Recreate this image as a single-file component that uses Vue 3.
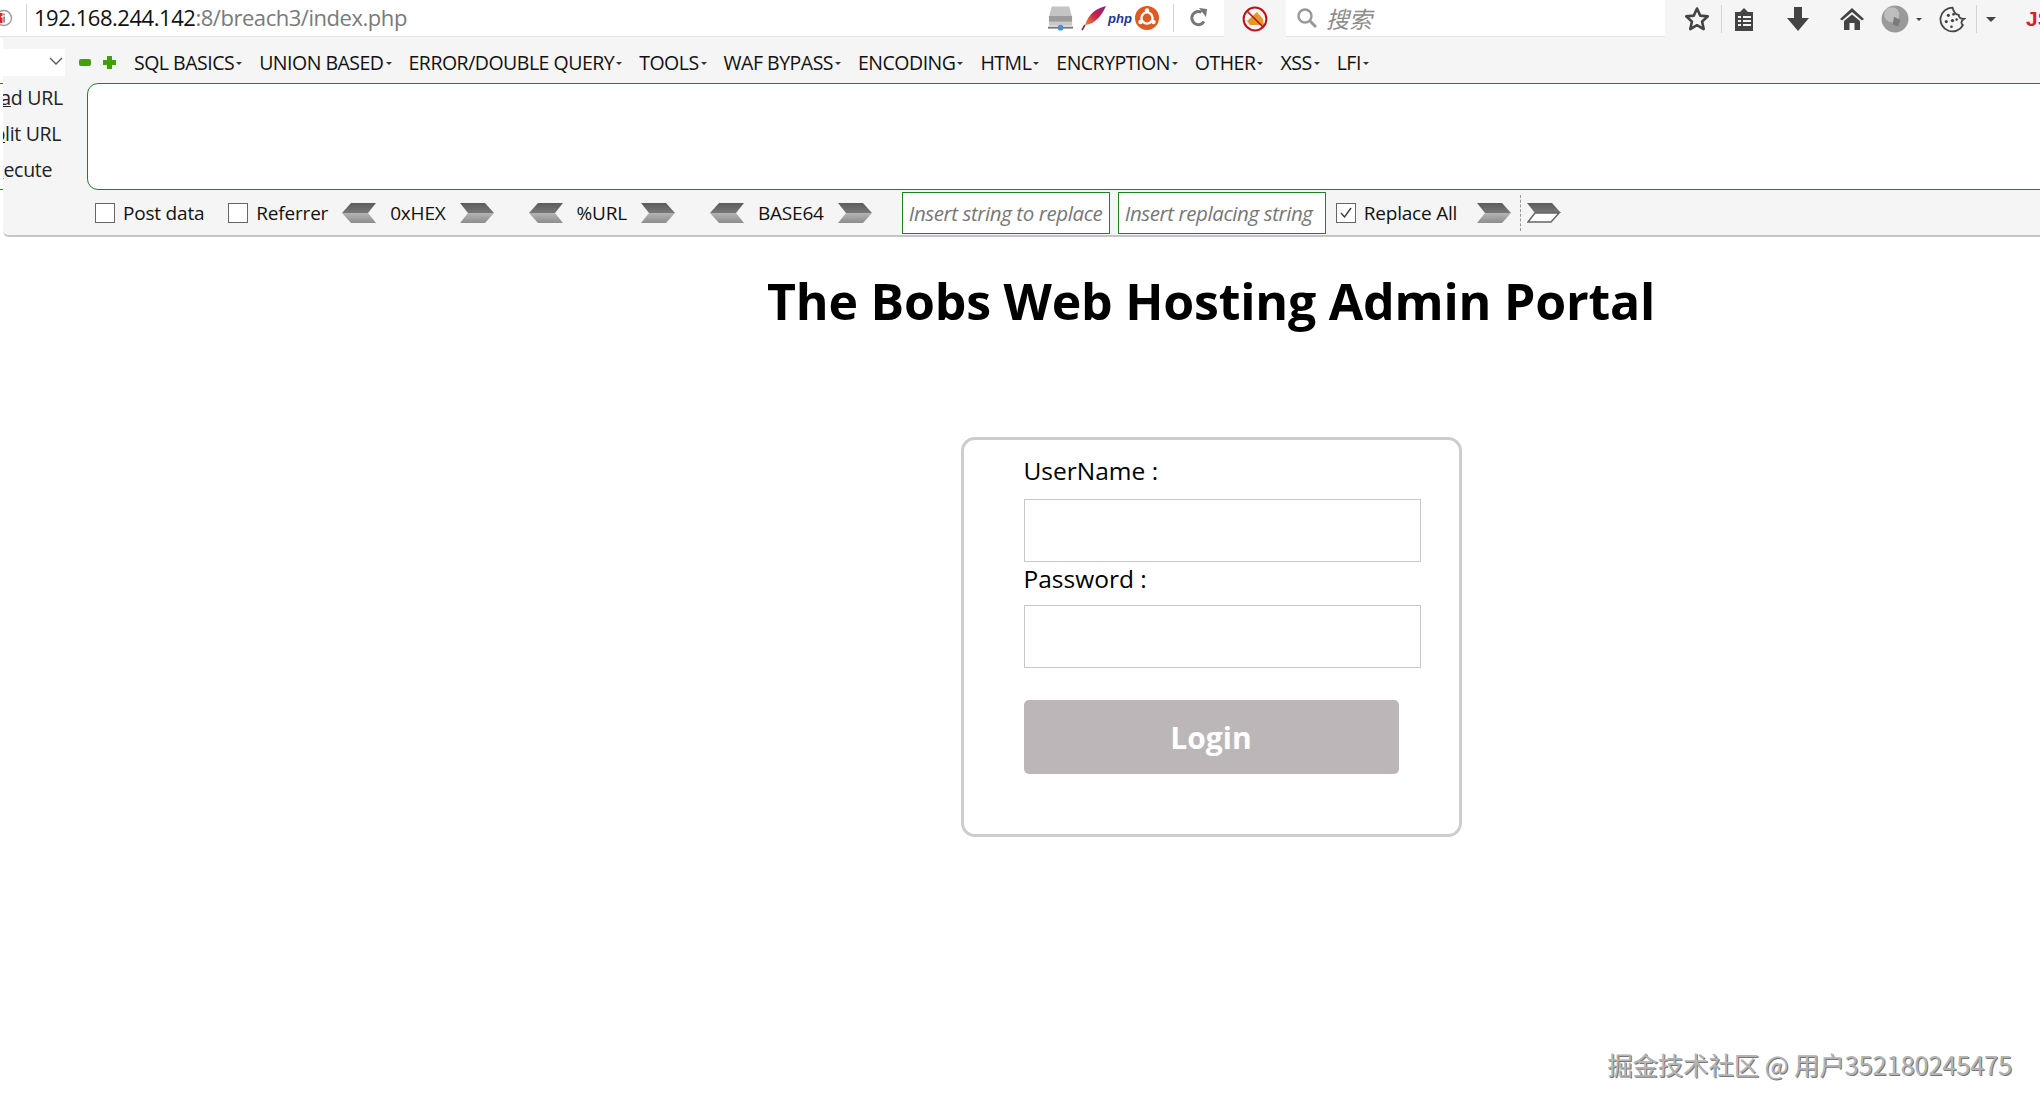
<script setup>
const menu = ['SQL BASICS', 'UNION BASED', 'ERROR/DOUBLE QUERY', 'TOOLS', 'WAF BYPASS', 'ENCODING', 'HTML', 'ENCRYPTION', 'OTHER', 'XSS', 'LFI']
const encoders = ['0xHEX', '%URL', 'BASE64']
</script>

<template>
  <div class="page">
    <svg width="0" height="0" class="defs">
      <defs>
        <linearGradient id="chevTop" x1="0" y1="0" x2="0" y2="1">
          <stop offset="0" stop-color="#5c5c5c" />
          <stop offset="1" stop-color="#777" />
        </linearGradient>
        <linearGradient id="chevBot" x1="0" y1="0" x2="0" y2="1">
          <stop offset="0" stop-color="#b4b4b4" />
          <stop offset="1" stop-color="#8d8d8d" />
        </linearGradient>
        <linearGradient id="feather" x1="1" y1="0" x2="0" y2="1">
          <stop offset="0" stop-color="#7b2a8c" />
          <stop offset="0.5" stop-color="#c8204f" />
          <stop offset="1" stop-color="#ef8a2a" />
        </linearGradient>
      </defs>
    </svg>

    <header class="navbar">
      <div class="urlbox">
        <svg class="site-info" width="14" height="22" viewBox="0 0 14 22">
          <circle cx="4" cy="11" r="7.5" fill="none" stroke="#9a9a9a" stroke-width="1.4" />
          <rect x="3.2" y="9.5" width="1.8" height="6" fill="#8a8a8a" />
          <rect x="3.2" y="6.5" width="1.8" height="1.8" fill="#8a8a8a" />
          <path d="M0 6h2.5v3H1v1.5h1.5V16H0z" fill="#d8282c" />
        </svg>
        <span class="sep"></span>
        <div class="address"><span class="host">192.168.244.142</span>:8/breach3/index.php</div>
        <svg class="ic-server" width="27" height="28" viewBox="0 0 28 28">
          <path d="M5 2h18l3 11H2z" fill="#c4c4c4" />
          <rect x="2" y="12" width="24" height="6" fill="#9b9b9b" />
          <rect x="2" y="18" width="24" height="4" fill="#c9c9c9" />
          <rect x="1" y="23" width="26" height="2" fill="#777" />
          <circle cx="14" cy="24" r="3" fill="#4a8fd0" />
        </svg>
        <svg class="ic-feather" width="26" height="26" viewBox="0 0 26 26">
          <path d="M25 1C16 3 8 8 4 20c4 0 14-3 21-19z" fill="url(#feather)" />
          <path d="M4 20l-3 5" stroke="#6b2a4b" stroke-width="1.5" />
        </svg>
        <span class="php">php</span>
        <svg class="ic-ubuntu" width="24" height="24" viewBox="0 0 24 24">
          <circle cx="12" cy="12" r="12" fill="#dd5a22" />
          <circle cx="12" cy="12" r="5.6" fill="none" stroke="#fff" stroke-width="2.4" />
          <circle cx="12" cy="4.5" r="2.2" fill="#fff" />
          <circle cx="5.5" cy="16" r="2.2" fill="#fff" />
          <circle cx="18.5" cy="16" r="2.2" fill="#fff" />
        </svg>
        <span class="sep sep-reload"></span>
        <svg class="ic-reload" width="20" height="20" viewBox="0 0 20 20">
          <path d="M15 13.5A6.6 6.6 0 1 1 12.5 4.2" fill="none" stroke="#777" stroke-width="3" />
          <path d="M10 0l8 1-1 8z" fill="#777" />
        </svg>
      </div>
      <div class="nope-cell">
        <svg width="26" height="26" viewBox="0 0 26 26">
          <path d="M5 15l10-9 6 7 1 6H8z" fill="#e39a2a" />
          <circle cx="13" cy="13" r="11.400" fill="none" stroke="#b8141c" stroke-width="2" />
          <path d="M5 5l16 16" stroke="#b8141c" stroke-width="1.700" />
        </svg>
      </div>
      <div class="search">
        <svg width="22" height="22" viewBox="0 0 22 22">
          <circle cx="9" cy="9" r="6.5" fill="none" stroke="#999" stroke-width="2.4" />
          <path d="M14 14l6 6" stroke="#999" stroke-width="3" />
        </svg>
        <span>搜索</span>
      </div>
      <div class="tools">
        <svg class="ic-star" width="26" height="26" viewBox="0 0 26 26">
          <path d="M13 2.5l3.2 7.1 7.6.8-5.7 5.1 1.6 7.6-6.7-3.9-6.7 3.9 1.6-7.6-5.7-5.1 7.6-.8z" fill="none" stroke="#444" stroke-width="2.6" stroke-linejoin="round" />
        </svg>
        <span class="sep sep-tool"></span>
        <svg class="ic-list" width="22" height="26" viewBox="0 0 22 26">
          <path d="M2 6h5l4-4 4 4h5v19H2z" fill="#444" />
          <path d="M5 11h3M10 11h8M5 15h3M10 15h8M5 19h3M10 19h8" stroke="#f5f5f5" stroke-width="1.8" />
        </svg>
        <svg class="ic-down" width="24" height="26" viewBox="0 0 24 26">
          <path d="M8 1h8v11h7L12 25 1 12h7z" fill="#444" />
        </svg>
        <svg class="ic-home" width="24" height="24" viewBox="0 0 24 24">
          <path d="M12 1L0 12l2 1.5L12 5l10 8.500 2-1.500z" fill="#444" />
          <path d="M4 14l8-6.500 8 6.500v9h-5.500v-7h-5v7H4z" fill="#444" />
        </svg>
        <svg class="ic-globe" width="28" height="28" viewBox="0 0 26 26">
          <circle cx="13" cy="13" r="12.500" fill="#9a9a9a" />
          <circle cx="10" cy="9" r="7" fill="#bdbdbd" />
          <path d="M12 11l6 3-2 6-5-2z" fill="#7a7a7a" />
        </svg>
        <span class="mini-caret"></span>
        <svg class="ic-cookie" width="27" height="27" viewBox="0 0 26 26">
          <path d="M13 1.500a11.500 11.500 0 1 0 10 17c-2-2-2-4 1-6-3 0-5-1-5-4-3 0-5-3-6-7z" fill="#f5f5f5" stroke="#444" stroke-width="1.7" />
          <circle cx="9" cy="9" r="1.500" fill="#444" />
          <circle cx="14" cy="8" r="1.300" fill="#444" />
          <circle cx="7" cy="15" r="1.500" fill="#444" />
          <circle cx="13" cy="14" r="1.600" fill="#444" />
          <circle cx="17" cy="13" r="1.200" fill="#444" />
          <circle cx="12" cy="20" r="1.300" fill="#444" />
        </svg>
        <span class="sep sep-cookie"></span>
        <span class="caret"></span>
        <span class="js">JS</span>
      </div>
    </header>

    <section class="hackbar">
      <div class="menu-row">
        <div class="select-box">
          <svg width="14" height="8" viewBox="0 0 14 8"><path d="M1 1l6 6 6-6" fill="none" stroke="#555" stroke-width="1.300" /></svg>
        </div>
        <span class="minus"></span>
        <svg class="plus" width="13" height="13" viewBox="0 0 13 13">
          <path d="M4 0h5v4h4v5H9v4H4V9H0V4h4z" fill="#3fa00c" />
        </svg>
        <nav class="menu">
          <span v-for="item in menu" :key="item" class="menu-item">{{ item }}<i class="drop"></i></span>
        </nav>
      </div>

      <div class="url-row">
        <div class="actions">
          <span class="action a-load">Lo<u>a</u>d URL</span>
          <span class="action a-split">S<u>p</u>lit URL</span>
          <span class="action a-exec">E<u>x</u>ecute</span>
        </div>
        <div class="url-area"></div>
      </div>

      <div class="option-row">
        <label class="check first"><span class="box"></span>Post data</label>
        <label class="check second"><span class="box"></span>Referrer</label>
        <div v-for="enc in encoders" :key="enc" class="encoder">
          <svg class="chev" width="34" height="20" viewBox="0 0 34 20">
            <path d="M9 0h25l-8 10H0z" fill="url(#chevTop)" />
            <path d="M0 10h26l8 10H9z" fill="url(#chevBot)" />
          </svg>
          <span class="enc-label">{{ enc }}</span>
          <svg class="chev" width="34" height="20" viewBox="0 0 34 20">
            <path d="M0 0h25l9 10H8z" fill="url(#chevTop)" />
            <path d="M8 10h26l-9 10H0z" fill="url(#chevBot)" />
          </svg>
        </div>
        <div class="replace first-replace">Insert string to replace</div>
        <div class="replace second-replace">Insert replacing string</div>
        <label class="check third">
          <span class="box">
            <svg width="16" height="16" viewBox="0 0 16 16"><path d="M3 8l3.500 4L13 3" fill="none" stroke="#333" stroke-width="1.300" /></svg>
          </span>Replace All
        </label>
        <svg class="chev chev-run" width="34" height="20" viewBox="0 0 34 20">
          <path d="M0 0h25l9 10H8z" fill="url(#chevTop)" />
          <path d="M8 10h26l-9 10H0z" fill="url(#chevBot)" />
        </svg>
        <span class="dashed"></span>
        <svg class="chev" width="34" height="20" viewBox="0 0 34 20">
          <path d="M0 0h25l9 10H8z" fill="url(#chevTop)" />
          <path d="M8 10h24l-8 9H1z" fill="#fff" stroke="#666" stroke-width="1.500" />
        </svg>
      </div>
    </section>

    <main class="content">
      <h1>The Bobs Web Hosting Admin Portal</h1>
      <form class="card" @submit.prevent>
        <label class="field-label">UserName :</label>
        <input class="field" type="text" />
        <label class="field-label password">Password :</label>
        <input class="field" type="password" />
        <button class="login" type="submit">Login</button>
      </form>
    </main>

    <div class="watermark">掘金技术社区 @ 用户352180245475</div>
  </div>
</template>

<style scoped>
.page {
  position: relative;
  width: 2040px;
  height: 1107px;
  overflow: hidden;
  background: #fff;
  font-family: "Open Sans", "Noto Sans", "Noto Sans CJK SC", sans-serif;
  color: #000;
}
.defs { position: absolute; }

.navbar {
  display: flex;
  height: 38px;
  background: #f5f5f5;
}
.urlbox {
  width: 1224px;
  height: 37px;
  display: flex;
  align-items: center;
  background: #fff;
  border-bottom: 1px solid #e4e4e4;
  box-sizing: border-box;
  flex-shrink: 0;
}
.site-info { flex-shrink: 0; }
.sep {
  display: inline-block;
  width: 1px;
  height: 28px;
  background: #d4d4d4;
  flex-shrink: 0;
}
.urlbox > .sep:first-of-type { margin-left: 12px; }
.address {
  margin-left: 7px;
  width: 1013px;
  flex-shrink: 0;
  font-size: 22px;
  line-height: 28px;
  padding-bottom: 2px;
  letter-spacing: -0.46px;
  color: #7a7a7a;
  white-space: nowrap;
}
.host { color: #111; }
.ic-server { flex-shrink: 0; }
.ic-feather { margin-left: 7px; flex-shrink: 0; }
.php {
  margin-left: 1px;
  font: italic bold 13px "Liberation Sans", sans-serif;
  color: #23359a;
}
.ic-ubuntu { margin-left: 3px; flex-shrink: 0; }
.sep-reload { margin-left: 14px; }
.ic-reload { margin-left: 15px; flex-shrink: 0; }
.nope-cell {
  width: 62px;
  height: 38px;
  display: flex;
  align-items: center;
  justify-content: center;
  flex-shrink: 0;
}
.search {
  width: 379px;
  height: 37px;
  box-sizing: border-box;
  padding-left: 10px;
  display: flex;
  align-items: center;
  gap: 8px;
  background: #fff;
  border-bottom: 1px solid #e4e4e4;
  font-family: "Noto Sans CJK SC", sans-serif;
  font-style: italic;
  font-size: 23px;
  color: #8c8c8c;
  flex-shrink: 0;
}
.tools {
  display: flex;
  align-items: center;
  padding-left: 19px;
  height: 38px;
  flex: 1;
  overflow: hidden;
}
.tools svg { flex-shrink: 0; }
.sep-tool { margin-left: 11px; }
.ic-list { margin-left: 11px; }
.ic-down { margin-left: 31px; }
.ic-home { margin-left: 30px; }
.ic-globe { margin-left: 17px; }
.mini-caret {
  margin-left: 7px;
  border-left: 3px solid transparent;
  border-right: 3px solid transparent;
  border-top: 3px solid #444;
}
.ic-cookie { margin-left: 17px; }
.sep-cookie { margin-left: 10px; }
.caret {
  margin-left: 9px;
  border-left: 5px solid transparent;
  border-right: 5px solid transparent;
  border-top: 5px solid #444;
}
.js {
  margin-left: 30px;
  font: bold 21px "Liberation Sans", sans-serif;
  color: #d3232a;
}

.hackbar {
  height: 199px;
  margin-left: 3px;
  background: #f5f5f5;
  border-bottom: 2px solid #c4c4c4;
  border-bottom-left-radius: 6px;
  box-sizing: border-box;
}
.menu-row {
  height: 45px;
  display: flex;
  align-items: center;
  padding-top: 4px;
  box-sizing: border-box;
}
.select-box {
  width: 62px;
  height: 27px;
  background: #fff;
  display: flex;
  align-items: center;
  justify-content: flex-end;
  box-sizing: border-box;
  padding-bottom: 3px;
  padding-right: 1px;
}
.select-box svg { margin-right: 1px; }
.minus {
  margin-left: 14px;
  width: 12px;
  height: 7px;
  border-radius: 2px;
  background: #3fa00c;
}
.plus { margin-left: 12px; }
.menu {
  display: flex;
  gap: 17px;
  margin-left: 18px;
  white-space: nowrap;
  font-size: 19.500px;
  letter-spacing: -0.5px;
  color: #111;
}
.menu-item { display: inline-flex; align-items: center; }
.drop {
  margin-left: 2px;
  margin-top: 1px;
  border-left: 3px solid transparent;
  border-right: 3px solid transparent;
  border-top: 3px solid #333;
}
.url-row {
  position: relative;
  display: flex;
  height: 107px;
}
.url-row::before {
  content: "";
  position: absolute;
  left: -3px;
  top: 0;
  width: 3px;
  height: 107px;
  box-sizing: border-box;
  border-top: 1.500px solid #238023;
  border-bottom: 1.500px solid #238023;
}
.actions {
  width: 84px;
  overflow: hidden;
  display: flex;
  flex-direction: column;
  justify-content: space-between;
  padding: 1px 0 7px;
  box-sizing: border-box;
  font-size: 19.500px;
  letter-spacing: -0.3px;
  color: #222;
  white-space: nowrap;
  flex-shrink: 0;
}
.a-load { margin-left: -24px; }
.a-split { margin-left: -20px; }
.a-exec { margin-left: -20px; }
.url-area {
  flex: 1;
  margin-right: -20px;
  background: #fff;
  border: 1.500px solid #238023;
  border-radius: 11px 0 0 11px;
  box-sizing: border-box;
}
.option-row {
  height: 45px;
  padding-top: 1px;
  box-sizing: border-box;
  display: flex;
  align-items: center;
  font-size: 19px;
  letter-spacing: -0.2px;
  color: #111;
  white-space: nowrap;
}
.check {
  display: flex;
  align-items: center;
  gap: 8px;
}
.box {
  width: 20px;
  height: 20px;
  background: #fff;
  border: 1px solid #666;
  box-sizing: border-box;
  display: flex;
  align-items: center;
  justify-content: center;
}
.first { margin-left: 92px; }
.second { margin-left: 24px; }
.encoder {
  display: flex;
  align-items: center;
  margin-left: 14px;
  flex-shrink: 0;
}
.encoder + .encoder { margin-left: 35px; }
.enc-label { margin: 0 14px; }
.replace {
  height: 42px;
  width: 208px;
  background: #fff;
  border: 1px solid #238023;
  box-sizing: border-box;
  display: flex;
  align-items: center;
  padding-left: 6px;
  font-style: italic;
  color: #777;
  letter-spacing: -0.4px;
  font-size: 20.500px;
  flex-shrink: 0;
}
.first-replace { margin-left: 30px; }
.second-replace { margin-left: 8px; }
.third { margin-left: 10px; }
.chev { flex-shrink: 0; }
.chev-run { margin-left: 20px; }
.dashed {
  margin: 0 6px 0 9px;
  height: 36px;
  border-left: 1px dashed #999;
}

.content {
  padding-left: 382px;
  display: flex;
  flex-direction: column;
  align-items: center;
}
h1 {
  margin: 30px 0 0;
  font-size: 50px;
  line-height: 68px;
  font-weight: 700;
  letter-spacing: -0.2px;
  white-space: nowrap;
}
.card {
  width: 501px;
  height: 400px;
  margin-top: 102px;
  padding: 14px 40px 0 60px;
  border: 3px solid #cdcdcd;
  border-radius: 14px;
  box-sizing: border-box;
  display: flex;
  flex-direction: column;
  align-items: flex-start;
}
.field-label {
  font-size: 24.500px;
  line-height: 33px;
  height: 33px;
  margin-bottom: 12px;
}
.field-label.password { margin-top: 0; margin-bottom: 10px; }
.field {
  width: 397px;
  height: 63px;
  border: 1px solid #c8c8c8;
  box-sizing: border-box;
  background: #fff;
  flex-shrink: 0;
}
.login {
  width: 375px;
  height: 74px;
  margin-top: 32px;
  border: none;
  border-radius: 5px;
  background: #bcb6b8;
  color: #fff;
  font: 700 30px "Open Sans", "Noto Sans", sans-serif;
}
.watermark {
  position: absolute;
  right: 28px;
  bottom: 26px;
  font-family: "Noto Sans CJK SC", sans-serif;
  font-size: 25.500px;
  line-height: 34px;
  letter-spacing: -0.2px;
  color: #b4b4b4;
  text-shadow: 1px 1px 0 #777;
  white-space: nowrap;
}
</style>
